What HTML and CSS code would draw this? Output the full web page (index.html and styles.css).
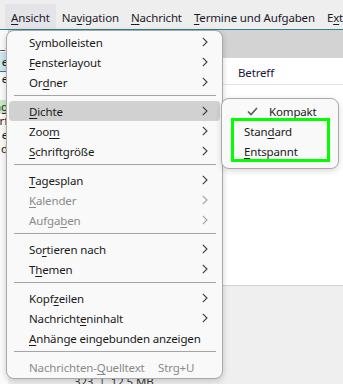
FILE: index.html
```html
<!DOCTYPE html>
<html lang="de">
<head>
<meta charset="utf-8">
<link rel="stylesheet" href="styles.css">
</head>
<body>
<div class="app">
  <div class="menubar">
    <span class="mb-item active"><u>A</u>nsicht</span>
    <span class="mb-item">Na<u>v</u>igation</span>
    <span class="mb-item"><u>N</u>achricht</span>
    <span class="mb-item"><u>T</u>ermine und Aufgaben</span>
    <span class="mb-item">E<u>x</u>tras</span>
  </div>
  <div class="main">
    <div class="left">
      <div class="l-row" style="height:8px"></div>
      <div class="l-row">_.</div>
      <div class="l-row sel">e</div>
      <div class="l-row">e</div>
      <div class="l-row"></div>
      <div class="l-row grn">ng</div>
      <div class="l-row">rf</div>
      <div class="l-row">e</div>
      <div class="l-row">d</div>
    </div>
    <div class="content">
      <div class="c-head"></div>
      <div class="c-list">
        <div class="c-cols"><span class="col-from">Von</span><span class="betreff">Betreff</span></div>
      </div>
      <div class="c-bottom"></div>
    </div>
  </div>
  <div class="status">323 &nbsp;|&nbsp; 12,5 MB</div>

  <div class="menu">
    <div class="mi">Symbolleisten<svg class="arr" width="6" height="10" viewBox="0 0 6 10"><polyline points="0.8,0.8 5,5 0.8,9.2" fill="none" stroke="#3a3a3a" stroke-width="1.1"/></svg></div>
    <div class="mi"><u>F</u>ensterlayout<svg class="arr" width="6" height="10" viewBox="0 0 6 10"><polyline points="0.8,0.8 5,5 0.8,9.2" fill="none" stroke="#3a3a3a" stroke-width="1.1"/></svg></div>
    <div class="mi">Or<u>d</u>ner<svg class="arr" width="6" height="10" viewBox="0 0 6 10"><polyline points="0.8,0.8 5,5 0.8,9.2" fill="none" stroke="#3a3a3a" stroke-width="1.1"/></svg></div>
    <div class="sep"></div>
    <div class="mi hl"><u>D</u>ichte<svg class="arr" width="6" height="10" viewBox="0 0 6 10"><polyline points="0.8,0.8 5,5 0.8,9.2" fill="none" stroke="#3a3a3a" stroke-width="1.1"/></svg></div>
    <div class="mi">Zoo<u>m</u><svg class="arr" width="6" height="10" viewBox="0 0 6 10"><polyline points="0.8,0.8 5,5 0.8,9.2" fill="none" stroke="#3a3a3a" stroke-width="1.1"/></svg></div>
    <div class="mi"><u>S</u>chriftgröße<svg class="arr" width="6" height="10" viewBox="0 0 6 10"><polyline points="0.8,0.8 5,5 0.8,9.2" fill="none" stroke="#3a3a3a" stroke-width="1.1"/></svg></div>
    <div class="sep"></div>
    <div class="mi"><u>T</u>agesplan<svg class="arr" width="6" height="10" viewBox="0 0 6 10"><polyline points="0.8,0.8 5,5 0.8,9.2" fill="none" stroke="#3a3a3a" stroke-width="1.1"/></svg></div>
    <div class="mi dis"><u>K</u>alender<svg class="arr" width="6" height="10" viewBox="0 0 6 10"><polyline points="0.8,0.8 5,5 0.8,9.2" fill="none" stroke="#a0a0a0" stroke-width="1.1"/></svg></div>
    <div class="mi dis">Aufga<u>b</u>en<svg class="arr" width="6" height="10" viewBox="0 0 6 10"><polyline points="0.8,0.8 5,5 0.8,9.2" fill="none" stroke="#a0a0a0" stroke-width="1.1"/></svg></div>
    <div class="sep"></div>
    <div class="mi">So<u>r</u>tieren nach<svg class="arr" width="6" height="10" viewBox="0 0 6 10"><polyline points="0.8,0.8 5,5 0.8,9.2" fill="none" stroke="#3a3a3a" stroke-width="1.1"/></svg></div>
    <div class="mi">T<u>h</u>emen<svg class="arr" width="6" height="10" viewBox="0 0 6 10"><polyline points="0.8,0.8 5,5 0.8,9.2" fill="none" stroke="#3a3a3a" stroke-width="1.1"/></svg></div>
    <div class="sep"></div>
    <div class="mi">Kopf<u>z</u>eilen<svg class="arr" width="6" height="10" viewBox="0 0 6 10"><polyline points="0.8,0.8 5,5 0.8,9.2" fill="none" stroke="#3a3a3a" stroke-width="1.1"/></svg></div>
    <div class="mi">Nachricht<u>e</u>ninhalt<svg class="arr" width="6" height="10" viewBox="0 0 6 10"><polyline points="0.8,0.8 5,5 0.8,9.2" fill="none" stroke="#3a3a3a" stroke-width="1.1"/></svg></div>
    <div class="mi"><u>A</u>nhänge eingebunden anzeigen</div>
    <div class="sep"></div>
    <div class="mi dis">Nachrichten-<u>Q</u>uelltext<span class="key">Strg+U</span></div>
  </div>

  <div class="submenu">
    <div class="si checked">
      <svg class="check" width="11" height="9" viewBox="0 0 11 9"><path d="M1 4.5 L4 7.5 L10 1" fill="none" stroke="#5a5a5a" stroke-width="1.6"/></svg>
      <span><u>K</u>ompakt</span>
    </div>
    <div class="si">Stan<u>d</u>ard</div>
    <div class="si"><u>E</u>ntspannt</div>
  </div>
  <div class="annot"></div>
</div>
</body>
</html>
```

FILE: styles.css
```css
* { box-sizing: border-box; }
html, body { margin: 0; padding: 0; }
body {
  width: 343px;
  height: 384px;
  overflow: hidden;
  background: #efefef;
  font-family: "Noto Sans", "Open Sans", sans-serif;
  font-size: 11.5px;
  letter-spacing: -0.15px;
  color: #1a1a1a;
}
u { text-decoration: underline; text-underline-offset: 2px; text-decoration-thickness: 1px; }

.app { position: relative; width: 343px; height: 384px; display: flex; flex-direction: column; }

.menubar {
  height: 30px;
  flex: none;
  background: #eeeeee;
  border-bottom: 1px solid #2f7f8f;
  display: flex;
  align-items: flex-end;
  padding-left: 5px;
  white-space: nowrap;
  overflow: hidden;
}
.mb-item {
  height: 25px;
  padding: 4px 6px 0;
  line-height: 20px;
  color: #1a1a2a;
}
.mb-item.active { background: #e4e4e8; }

.main { flex: 1; display: flex; min-height: 0; }
.left {
  width: 8px;
  flex: none;
  background: #fafafa;
  overflow: hidden;
  display: flex;
  flex-direction: column;
}
.l-row {
  height: 14px;
  line-height: 14px;
  display: flex;
  justify-content: flex-end;
  white-space: nowrap;
}
.l-row.sel { height: 20px; line-height: 20px; background: #cfe6ef; border-bottom: 1px solid #2f7f8f; }
.l-row.grn { background: #cfe9c8; }

.content { flex: 1; display: flex; flex-direction: column; }
.c-head { height: 28px; background: #d3d3d3; flex: none; }
.c-list { height: 228px; background: #ffffff; border-bottom: 1px solid #cfcfcf; flex: none; }
.c-cols {
  height: 27px;
  border-bottom: 1px solid #e2e2e2;
  display: grid;
  grid-template-columns: 230px 1fr;
  line-height: 29px;
}
.col-from { color: transparent; }
.betreff { color: #1a1640; }
.c-bottom { flex: 1; background: #efefef; }

.status {
  position: absolute;
  left: 74px;
  top: 374px;
  color: #333;
}

.menu {
  position: absolute;
  left: 6px;
  top: 30px;
  width: 217px;
  height: 349px;
  background: #f9f9f9;
  border: 1px solid #a9a9a9;
  border-radius: 8px;
  box-shadow: 0 2px 6px rgba(0,0,0,0.18);
  padding: 1px 0 2px;
}
.mi {
  height: 20px;
  display: flex;
  align-items: center;
  padding: 0 14px 0 22px;
  white-space: nowrap;
  color: #1a1a1a;
}
.mi.hl { background: #d1d1d1; border-radius: 4px; margin: 0 2px; padding-left: 20px; padding-right: 12px; }
.mi.dis { color: #8a8a8a; }
.arr { margin-left: auto; flex: none; }
.key { margin-left: auto; width: 50px; }
.sep { height: 1px; background: #a4a4a4; margin: 3px 6px 5px 7px; }

.submenu {
  position: absolute;
  left: 221px;
  top: 98px;
  width: 118px;
  height: 71px;
  background: #f9f9f9;
  border: 1px solid #a9a9a9;
  border-radius: 8px;
  box-shadow: 0 2px 6px rgba(0,0,0,0.15);
  padding: 2px 0 0;
}
.si {
  height: 20px;
  display: flex;
  align-items: center;
  padding-left: 22px;
  white-space: nowrap;
}
.si.checked { padding-left: 25px; }
.check { margin-right: 11px; }

.annot {
  position: absolute;
  left: 231px;
  top: 118px;
  width: 99px;
  height: 44px;
  border: 3px solid #00ff00;
}
```
